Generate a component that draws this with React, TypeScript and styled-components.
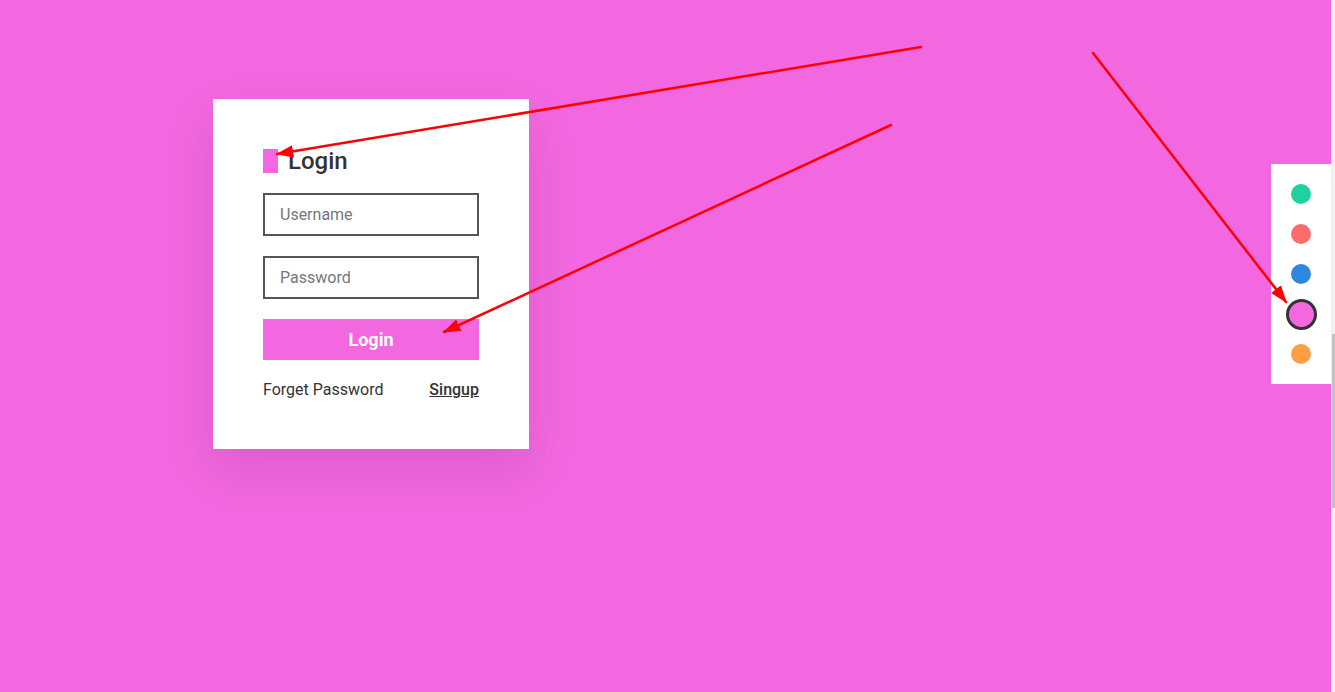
import React, { useState } from "react";
import styled, { createGlobalStyle } from "styled-components";

const GlobalStyle = createGlobalStyle`
  html, body { margin: 0; padding: 0; }
  body { font-family: Roboto, "Liberation Sans", Arial, sans-serif; overflow: hidden; }
  *, *::before, *::after { box-sizing: border-box; }
`;

const Page = styled.div<{ $accent: string }>`
  position: relative;
  display: flex;
  width: 100vw;
  height: 692px;
  background: ${(p) => p.$accent};
`;

const Main = styled.div`
  flex: 1;
  display: flex;
  justify-content: space-between;
  align-items: flex-start;
`;

const Card = styled.div`
  margin: 99px 0 0 213px;
  width: 316px;
  padding: 50px;
  background: #fff;
  box-shadow: 0 20px 45px rgba(60, 0, 60, 0.12);
  display: flex;
  flex-direction: column;
  gap: 20px;
`;

const TitleRow = styled.div`
  display: flex;
  align-items: center;
  gap: 10px;
  height: 24px;
`;

const TitleMark = styled.span<{ $accent: string }>`
  width: 15px;
  height: 24px;
  background: ${(p) => p.$accent};
`;

const Title = styled.h2`
  margin: 0;
  font-size: 24px;
  line-height: 24px;
  font-weight: 500;
  color: #333;
`;

const Input = styled.input`
  width: 216px;
  height: 43px;
  border: 2px solid #555;
  padding: 0 15px;
  font-family: Roboto, "Liberation Sans", Arial, sans-serif;
  font-size: 16px;
  color: #333;
  outline: none;
  &::placeholder { color: #777; }
`;

const Button = styled.button<{ $accent: string }>`
  width: 216px;
  height: 41px;
  border: none;
  background: ${(p) => p.$accent};
  color: #fff;
  font-family: Roboto, "Liberation Sans", Arial, sans-serif;
  font-size: 18px;
  font-weight: 700;
  cursor: pointer;
`;

const LinksRow = styled.div`
  display: flex;
  justify-content: space-between;
  line-height: 19px;
  font-size: 16px;
  color: #333;
`;

const Forget = styled.span``;

const Signup = styled.a`
  color: #333;
  font-weight: 500;
  text-decoration: underline;
`;

const Palette = styled.div`
  margin-top: 164px;
  width: 60px;
  padding: 10px 0;
  background: #fff;
  display: flex;
  flex-direction: column;
  align-items: center;
`;

const Swatch = styled.button<{ $color: string; $active: boolean }>`
  width: 40px;
  height: 40px;
  border: none;
  padding: 0;
  background: transparent;
  display: flex;
  align-items: center;
  justify-content: center;
  cursor: pointer;
  &::after {
    content: "";
    display: block;
    border-radius: 50%;
    background: ${(p) => p.$color};
    width: ${(p) => (p.$active ? "31px" : "20px")};
    height: ${(p) => (p.$active ? "31px" : "20px")};
    border: ${(p) => (p.$active ? "3px solid #333" : "none")};
  }
`;

const ScrollTrack = styled.div`
  width: 4px;
  background: #f1f1f1;
  display: flex;
  flex-direction: column;
  align-items: flex-end;
  padding-top: 334px;
`;

const ScrollThumb = styled.div`
  width: 3px;
  height: 174px;
  background: #c1c1c1;
`;

const Annotations = styled.svg`
  position: absolute;
  inset: 0;
  width: 100%;
  height: 100%;
  pointer-events: none;
`;

const colors = ["#1dd1a1", "#ff6b6b", "#2e86de", "#f368e0", "#ff9f43"];

export default function App() {
  const [accent, setAccent] = useState("#f368e0");
  return (
    <>
      <GlobalStyle />
      <Page $accent={accent}>
        <Main>
          <Card>
            <TitleRow>
              <TitleMark $accent={accent} />
              <Title>Login</Title>
            </TitleRow>
            <Input placeholder="Username" />
            <Input placeholder="Password" type="password" />
            <Button $accent={accent}>Login</Button>
            <LinksRow>
              <Forget>Forget Password</Forget>
              <Signup>Singup</Signup>
            </LinksRow>
          </Card>
          <Palette>
            {colors.map((c) => (
              <Swatch key={c} $color={c} $active={c === accent} onClick={() => setAccent(c)} />
            ))}
          </Palette>
        </Main>
        <ScrollTrack>
          <ScrollThumb />
        </ScrollTrack>
        <Annotations viewBox="0 0 1335 692">
          <defs>
            <marker id="ah" markerWidth="7" markerHeight="5" refX="6.5" refY="2.5" orient="auto" markerUnits="strokeWidth">
              <path d="M0,0 L7,2.5 L0,5 Z" fill="#ff0000" />
            </marker>
          </defs>
          <g stroke="#ff0000" strokeWidth="2.5" strokeLinecap="round" fill="none">
            <line x1="921" y1="47" x2="277" y2="154" markerEnd="url(#ah)" />
            <line x1="891" y1="125" x2="444" y2="332" markerEnd="url(#ah)" />
            <line x1="1093" y1="53" x2="1286" y2="302" markerEnd="url(#ah)" />
          </g>
        </Annotations>
      </Page>
    </>
  );
}
